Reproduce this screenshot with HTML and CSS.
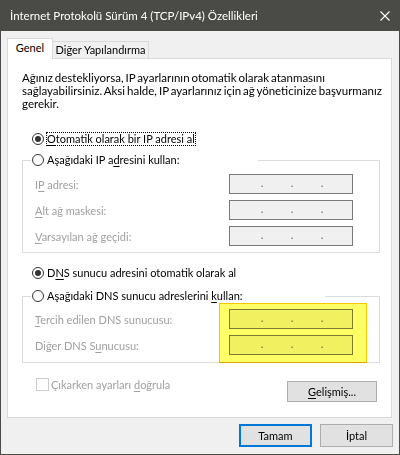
FILE: index.html
```html
<!DOCTYPE html>
<html lang="tr">
<head>
<meta charset="utf-8">
<title>İnternet Protokolü Sürüm 4 (TCP/IPv4) Özellikleri</title>
<link rel="stylesheet" href="styles.css">
</head>
<body>
<div class="window">
  <div class="titlebar">
    <span class="title">İnternet Protokolü Sürüm 4 (TCP/IPv4) Özellikleri</span>
    <svg class="close" width="10" height="10" viewBox="0 0 10 10"><path d="M0.5 0.5L9.5 9.5M9.5 0.5L0.5 9.5" stroke="#ffffff" stroke-width="1.1" fill="none"/></svg>
  </div>
  <div class="content">
    <div class="tabs">
      <div class="tab active">Genel</div>
      <div class="tab">Diğer Yapılandırma</div>
    </div>
    <div class="panel">
      <p class="desc">Ağınız destekliyorsa, IP ayarlarının otomatik olarak atanmasını<br>sağlayabilirsiniz. Aksi halde, IP ayarlarınız için ağ yöneticinize başvurmanız<br>gerekir.</p>

      <div class="radio-row r-auto-ip"><span class="radio checked"></span><span class="rlabel focus"><u>O</u>tomatik olarak bir IP adresi al</span></div>

      <fieldset class="group g-ip">
        <legend class="radio-row legend-ip"><span class="radio"></span><span class="rlabel">Aşağıdaki IP a<u>d</u>resini kullan:</span></legend>
        <div class="field f-first"><span class="flabel">I<u>P</u> adresi:</span><span class="ipbox"><span>.</span><span>.</span><span>.</span></span></div>
        <div class="field"><span class="flabel"><u>A</u>lt ağ maskesi:</span><span class="ipbox"><span>.</span><span>.</span><span>.</span></span></div>
        <div class="field"><span class="flabel"><u>V</u>arsayılan ağ geçidi:</span><span class="ipbox"><span>.</span><span>.</span><span>.</span></span></div>
      </fieldset>

      <div class="radio-row r-auto-dns"><span class="radio checked"></span><span class="rlabel">D<u>N</u>S sunucu adresini otomatik olarak al</span></div>

      <fieldset class="group g-dns">
        <legend class="radio-row legend-dns"><span class="radio"></span><span class="rlabel">Aşağıdaki DNS sunucu adreslerini <u>k</u>ullan:</span></legend>
        <div class="field f-first"><span class="flabel"><u>T</u>ercih edilen DNS sunucusu:</span><span class="ipbox"><span>.</span><span>.</span><span>.</span></span></div>
        <div class="field"><span class="flabel">Diğer DNS S<u>u</u>nucusu:</span><span class="ipbox"><span>.</span><span>.</span><span>.</span></span></div>
      </fieldset>

      <div class="bottom-row">
        <div class="check-row"><span class="checkbox"></span><span class="clabel">Çıkarken ayarları <u>d</u>oğrula</span></div>
        <div class="btn adv"><u>G</u>elişmiş...</div>
      </div>

      <div class="highlight"></div>
    </div>
    <div class="footer">
      <div class="btn ok">Tamam</div>
      <div class="btn">İptal</div>
    </div>
  </div>
</div>
</body>
</html>
```
FILE: styles.css
```css
* { box-sizing: border-box; }
html, body { margin: 0; padding: 0; }
body {
  width: 400px;
  height: 455px;
  overflow: hidden;
  background: #f0f0f0;
  font-family: Lato, "Noto Sans", sans-serif;
  font-size: 11px;
  color: #000;
}
u { text-decoration: underline; text-underline-offset: 2px; }

.window {
  width: 400px;
  height: 455px;
  border: 1px solid #4a4a47;
  border-top: 0;
  background: #f0f0f0;
  display: flex;
  flex-direction: column;
}
.titlebar {
  height: 31px;
  flex: none;
  background: #4a4a47;
  color: #fff;
  display: flex;
  align-items: center;
  padding: 0 9px;
}
.title { flex: 1; line-height: 31px; white-space: nowrap; font-size: 11.5px; }
.close { display: block; }

.content { padding: 7px 6px 0 6px; }

.tabs {
  display: flex;
  align-items: flex-end;
  height: 20px;
}
.tab {
  height: 17px;
  border: 1px solid #d9d9d9;
  border-left: 0;
  border-bottom: 0;
  background: #f0f0f0;
  width: 96px;
  text-align: center;
  line-height: 16px;
  white-space: nowrap;
}
.tab.active {
  width: 46px;
  height: 21px;
  margin-bottom: -1px;
  border-left: 1px solid #d9d9d9;
  background: #fff;
  position: relative;
  z-index: 1;
  line-height: 18px;
}

.panel {
  position: relative;
  width: 385px;
  height: 360px;
  border: 1px solid #d9d9d9;
  background: #fff;
  padding-top: 12px;
}
.desc {
  margin: 0;
  padding-left: 14px;
  font-size: 11.5px;
  word-spacing: -1px;
  line-height: 13px;
  white-space: nowrap;
}

.radio-row {
  display: flex;
  align-items: center;
  height: 14px;
}
.r-auto-ip { margin: 22px 0 0 24px; }
.r-auto-dns { margin: 13px 0 0 24px; }
.radio {
  width: 12px;
  height: 12px;
  border: 1px solid #333;
  border-radius: 50%;
  position: relative;
  flex: none;
  background: #fff;
}
.radio.checked::after {
  content: "";
  position: absolute;
  left: 2px;
  top: 2px;
  width: 6px;
  height: 6px;
  border-radius: 50%;
  background: #333;
}
.rlabel {
  margin-left: 2px;
  padding: 0 1px;
  line-height: 14px;
  height: 14px;
  white-space: nowrap;
}
.rlabel.focus { outline: 1px dotted #000; outline-offset: -1px; }

.group {
  margin: 0 0 0 14px;
  width: 358px;
  border: 1px solid #dcdcdc;
  padding: 0 26px 6px 8px;
  min-width: 0;
}
.g-ip { margin-top: 7px; }
.g-dns { margin-top: 9px; padding-bottom: 7px; }
.group legend {
  padding: 0 0 0 1px;
  margin: 0;
}
.legend-ip { width: 227px; }
.legend-dns { width: 294px; }

.field {
  display: flex;
  align-items: center;
  height: 20px;
  margin-top: 6px;
  padding-left: 4px;
  color: #a0a0a0;
}
.field.f-first { margin-top: 7px; }
.g-dns .field.f-first { margin-top: 6px; }
.flabel { flex: 1; white-space: nowrap; }
.ipbox {
  width: 124px;
  height: 20px;
  border: 1px solid #7a7a7a;
  background: #f0f0f0;
  display: flex;
  padding-left: 17px;
  color: #6a6a8a;
  line-height: 16px;
  font-size: 11.5px;
}
.ipbox span { width: 30px; text-align: center; }

.bottom-row {
  display: flex;
  align-items: flex-start;
  margin-top: 15px;
}
.check-row {
  display: flex;
  align-items: center;
  padding-left: 28px;
  height: 13px;
  color: #a0a0a0;
}
.checkbox {
  width: 13px;
  height: 13px;
  border: 1px solid #cccccc;
  background: #fff;
  flex: none;
}
.clabel { margin-left: 2px; white-space: nowrap; }

.btn {
  width: 73px;
  height: 23px;
  border: 1px solid #adadad;
  background: #e1e1e1;
  display: flex;
  align-items: center;
  justify-content: center;
  white-space: nowrap;
}
.btn.adv {
  width: 90px;
  height: 21px;
  margin: 3px 14px 0 auto;
}
.btn.ok { border: 2px solid #0078d7; }

.footer {
  display: flex;
  justify-content: flex-end;
  gap: 8px;
  margin-top: 6px;
}

.highlight {
  position: absolute;
  left: 211px;
  top: 244px;
  width: 148px;
  height: 60px;
  background: #ffff66;
  border: 1px solid #f7c600;
  mix-blend-mode: multiply;
  pointer-events: none;
}
```
